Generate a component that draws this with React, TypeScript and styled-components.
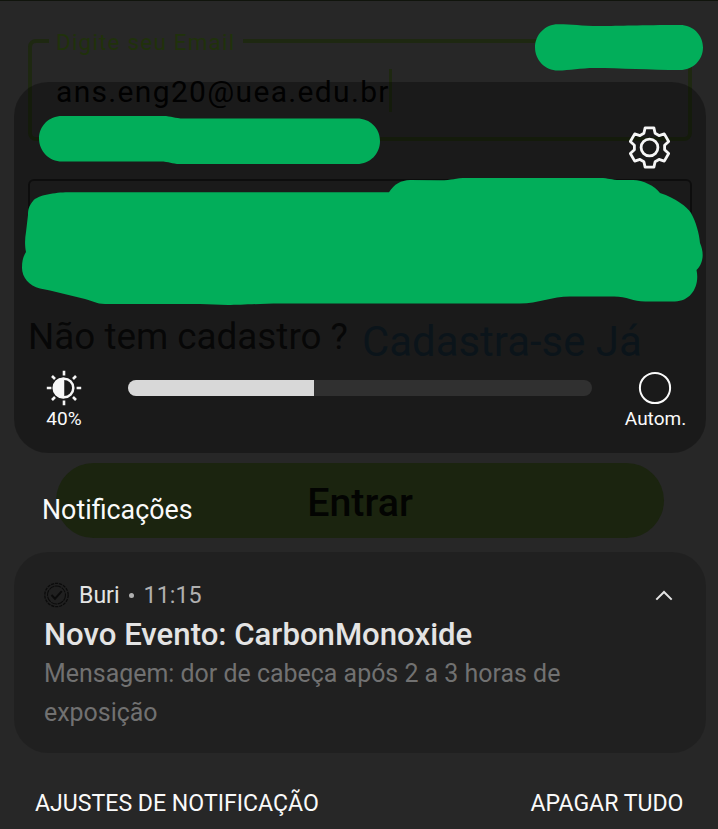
import React from "react";
import styled, { createGlobalStyle } from "styled-components";

const GlobalStyle = createGlobalStyle`
  *, *::before, *::after { box-sizing: border-box; }
  body {
    margin: 0;
    background: #272727;
    font-family: Roboto, "Liberation Sans", sans-serif;
  }
`;

const Screen = styled.main`
  position: relative;
  width: 718px;
  height: 829px;
  overflow: hidden;
  background: #272727;
`;

/* Login form dimmed behind the notification shade */

const LoginForm = styled.section`
  display: flex;
  flex-direction: column;
  height: 829px;
  padding: 27px 26px 0 28px;
  border-top: 1px solid #10140c;
`;

const EmailField = styled.fieldset`
  display: flex;
  align-items: flex-start;
  flex: none;
  height: 113px;
  margin: 0;
  padding: 15px 24px 0 17px;
  border: 4px solid #1e2811;
  border-radius: 8px;
`;

const FieldLegend = styled.legend`
  width: 194px;
  height: 26px;
  padding: 1px 0 0 7px;
  color: #20320b;
  font-size: 22.5px;
  line-height: 26px;
  letter-spacing: 1.18px;
  white-space: nowrap;
`;

const EmailValue = styled.span`
  padding: 1px 0 0 7px;
  color: #020202;
  font-size: 30px;
  line-height: 44px;
  letter-spacing: 1.33px;
`;

const Caret = styled.span`
  width: 3px;
  height: 43px;
  margin-left: -1px;
  background: #1e2811;
`;

const PasswordField = styled.div`
  flex: none;
  height: 101px;
  margin-top: 38px;
  border: 2px solid #141414;
  border-radius: 6px;
`;

const SignUpRow = styled.p`
  display: flex;
  gap: 14px;
  height: 60px;
  margin: 35px 0 0;
  color: #0b0b0b;
  font-size: 36.8px;
  line-height: 44px;
  white-space: nowrap;
`;

const SignUpLink = styled.a`
  padding-top: 5px;
  color: #101e27;
  font-size: 41.9px;
`;

const LoginButton = styled.button`
  flex: none;
  width: 608px;
  height: 75px;
  margin: 88px 0 0 28px;
  padding: 4px 0 0;
  border: 0;
  border-radius: 38px;
  background: #1b240f;
  color: #030402;
  font: 500 39.4px/71px Roboto, "Liberation Sans", sans-serif;
`;

/* Notification shade */

const Shade = styled.section`
  position: absolute;
  inset: 0;
  display: flex;
  flex-direction: column;
  padding: 82px 12px 0 14px;
  color: #fafafa;
`;

const QuickPanel = styled.div`
  display: flex;
  flex-direction: column;
  justify-content: space-between;
  flex: none;
  height: 371px;
  padding: 43px 18px 23px 28px;
  border-radius: 34px;
  background: rgba(0, 0, 0, 0.31);
`;

const PanelHeader = styled.div`
  display: flex;
  justify-content: flex-end;
  padding-right: 16px;
`;

const BrightnessRow = styled.div`
  display: flex;
  align-items: flex-start;
`;

const Control = styled.div<{ $width: number; $shift?: number }>`
  display: flex;
  flex-direction: column;
  align-items: center;
  flex: none;
  width: ${(p) => p.$width}px;
  font-size: 19px;
  line-height: 22px;

  svg {
    margin-right: ${(p) => p.$shift ?? 0}px;
  }
`;

const Track = styled.div`
  flex: 1;
  height: 16px;
  margin: 12px 31px 0 42px;
  border-radius: 8px;
  background: #303030;
  overflow: hidden;
`;

const TrackFill = styled.div`
  height: 100%;
  background: #d8d8d8;
`;

const SectionTitle = styled.h2`
  height: 30px;
  margin: 42px 0 27px 28px;
  font-size: 26.8px;
  font-weight: 400;
  line-height: 30px;
`;

const NotificationCard = styled.article`
  flex: none;
  height: 201px;
  padding: 28px 33px 0 30px;
  border-radius: 34px;
  background: rgba(0, 0, 0, 0.17);
`;

const CardHeader = styled.header`
  display: flex;
  align-items: center;
  height: 30px;
  color: #e4e4e4;
  font-size: 23.1px;
  line-height: 28px;
`;

const AppName = styled.span`
  margin: 2px 0 0 10px;
`;

const Dot = styled.span`
  width: 5px;
  height: 5px;
  margin: 0 10px 0 9px;
  border-radius: 50%;
  background: #b0b0b0;
`;

const Time = styled.time`
  flex: 1;
  color: #b0b0b0;
  font-size: 23.3px;
`;

const CardTitle = styled.h3`
  margin: 7px 0 0;
  color: #e4e4e4;
  font-size: 31.15px;
  font-weight: 500;
  line-height: 36px;
  white-space: nowrap;
`;

const CardBody = styled.p`
  width: 560px;
  margin: 1px 0 0;
  color: #717171;
  font-size: 24.95px;
  line-height: 39px;
`;

const ShadeFooter = styled.footer`
  display: flex;
  justify-content: space-between;
  margin-top: 36px;
  padding: 0 22.5px 0 21px;
`;

const FooterButton = styled.button`
  padding: 0;
  border: 0;
  background: none;
  color: #fafafa;
  font: 400 23.1px/30px Roboto, "Liberation Sans", sans-serif;
`;

const MarkerLayer = styled.svg`
  position: absolute;
  inset: 0;
  pointer-events: none;
`;

const gearPoints = Array.from({ length: 6 }, (_, i) => {
  const a = (i * Math.PI) / 3;
  return [[-5.6, -14.2], [-4.4, -19.6], [4.4, -19.6], [5.6, -14.2]]
    .map(([x, y]) =>
      `${(x * Math.cos(a) - y * Math.sin(a)).toFixed(2)},${(x * Math.sin(a) + y * Math.cos(a)).toFixed(2)}`)
    .join(" ");
}).join(" ");

const GearIcon = () => (
  <svg width="45" height="45" viewBox="-22.5 -22.5 45 45" fill="none" stroke="#f6f6f6" strokeWidth="2.8" strokeLinejoin="round">
    <polygon points={gearPoints} />
    <circle r="8.4" />
  </svg>
);

const BrightnessIcon = () => (
  <svg width="40" height="40" viewBox="-20 -20 40 40" fill="none" stroke="#f6f6f6" strokeWidth="2.5">
    <circle r="9.3" />
    <path d="M-1-9.3A9.3 9.3 0 0 0-1 9.3Z" fill="#f6f6f6" />
    <path
      strokeWidth="2.6"
      d="M0-17.2v4.6M0 17.2v-4.6M-17.2 0h4.6M17.2 0h-4.6M-12-12l3 3M12 12l-3-3M-12 12l3-3M12-12l-3 3"
    />
  </svg>
);

const AutoIcon = () => (
  <svg width="40" height="40" viewBox="-20 -20 40 40" fill="none" stroke="#fafafa" strokeWidth="2">
    <circle r="15.1" />
  </svg>
);

const SealIcon = () => (
  <svg width="25" height="26" viewBox="-12.5 -13 25 26" fill="none" stroke="#0b0b0b">
    <circle r="11.7" strokeWidth="1.3" strokeDasharray="3.2 .9" />
    <circle r="9" strokeWidth="1.1" strokeDasharray="6 .8" />
    <path d="M-5 0l3.5 3.7L5.3-3.8" strokeWidth="2" />
  </svg>
);

const ChevronUp = () => (
  <svg width="18" height="12" viewBox="0 0 18 12" fill="none" stroke="#e4e4e4" strokeWidth="2">
    <path d="M1.3 10.6L9 3l7.700 7.600" />
  </svg>
);

export default function App() {
  return (
    <>
      <GlobalStyle />
      <Screen>
        <LoginForm>
          <EmailField>
            <FieldLegend>Digite seu Email</FieldLegend>
            <EmailValue>ans.eng20@uea.edu.br</EmailValue>
            <Caret />
          </EmailField>
          <PasswordField />
          <SignUpRow>
            Não tem cadastro ?<SignUpLink>Cadastra-se Já</SignUpLink>
          </SignUpRow>
          <LoginButton>Entrar</LoginButton>
        </LoginForm>

        <Shade>
          <QuickPanel>
            <PanelHeader>
              <GearIcon />
            </PanelHeader>
            <BrightnessRow>
              <Control $width={44}>
                <BrightnessIcon />
                40%
              </Control>
              <Track>
                <TrackFill style={{ width: "40%" }} />
              </Track>
              <Control $width={65} $shift={1}>
                <AutoIcon />
                Autom.
              </Control>
            </BrightnessRow>
          </QuickPanel>
          <SectionTitle>Notificações</SectionTitle>
          <NotificationCard>
            <CardHeader>
              <SealIcon />
              <AppName>Buri</AppName>
              <Dot />
              <Time>11:15</Time>
              <ChevronUp />
            </CardHeader>
            <CardTitle>Novo Evento: CarbonMonoxide</CardTitle>
            <CardBody>Mensagem: dor de cabeça após 2 a 3 horas de exposição</CardBody>
          </NotificationCard>
          <ShadeFooter>
            <FooterButton>AJUSTES DE NOTIFICAÇÃO</FooterButton>
            <FooterButton>APAGAR TUDO</FooterButton>
          </ShadeFooter>
        </Shade>

        {/* Freehand marker strokes covering private details */}
        <MarkerLayer width="718" height="829" viewBox="0 0 718 829" fill="#02ae5a">
          <path d="M558 24.3C573 24.3 580 26 600 26C620 26 640 25 680 25C693 25 703 35 703 47.500C703 60 693 70 680 70C650 70 620 68 595 68C580 68 570 70.500 558 70.500C545 70.500 535 60 535 47.500C535 35 545 24.300 558 24.300Z" />
          <path d="M62 116H163C172 116 174 118.500 184 118.500H357C370 118.500 380 128 380 141C380 154 370 164 357 164H180C171 164 170 161.500 160 161.500H62C49 161.500 39 151 39 138.500C39 126 49 116 62 116Z" />
          <path d="M28 215C28 209 29 206 33 201C38 195 55 192.500 68 192.300H389C394 184 401 180.300 410 180L440 180.300C452 180.300 455 178 467 178H600C609 178 611 180 620 180H633C643 180 655 186 660 193C676 198 687 207 691 213C696 222 699 233 700 243C704 252 704 263 696.500 270C700 286 691 301.500 675 301.500H645C633 301.500 627 296.500 614 296.500H570C552 296.500 538 303.500 520 303.500H280C260 303.500 240 305 228 305C218 305 210 304 200 304H105C96 304 92 300.500 85 299L50 290.500L40 288.500C29 286 22 277 22 268C22 261 23 257 26 252C24.500 244 25 238 26 232Z" />
        </MarkerLayer>
      </Screen>
    </>
  );
}
